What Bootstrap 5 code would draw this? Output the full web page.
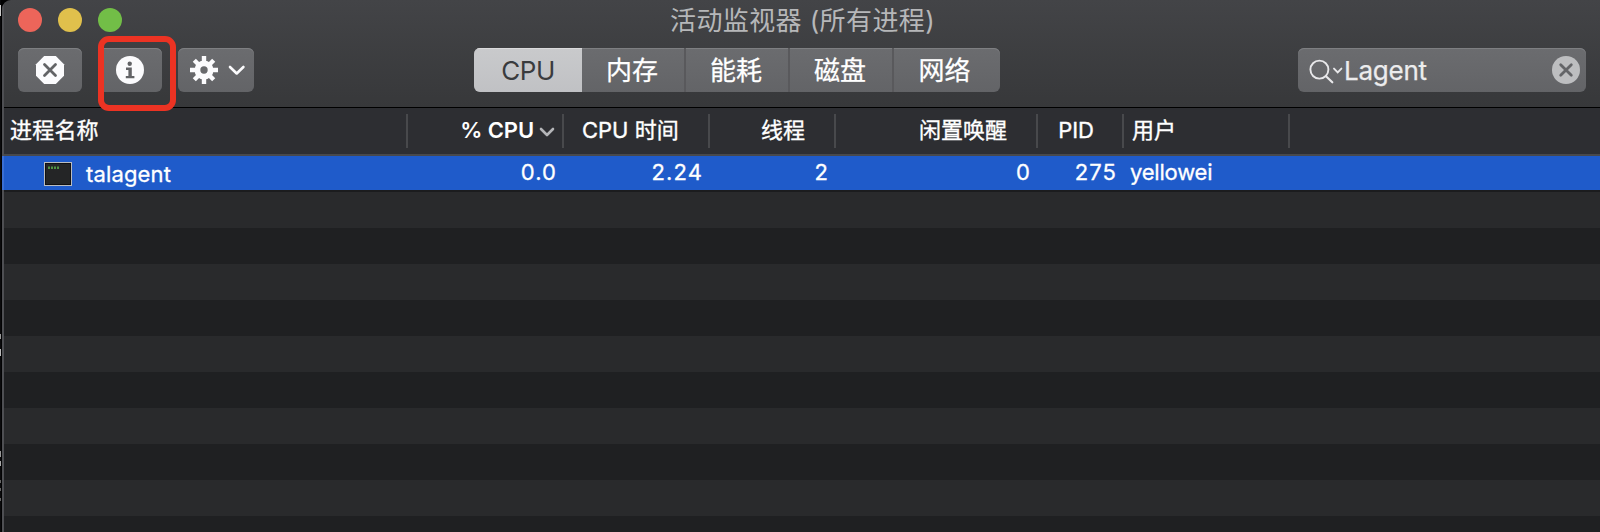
<!DOCTYPE html>
<html lang="zh-CN">
<head>
<meta charset="utf-8">
<title>活动监视器 (所有进程)</title>
<link href="https://cdn.jsdelivr.net/npm/bootstrap@5.3.0/dist/css/bootstrap.min.css" rel="stylesheet">
<script src="https://cdn.jsdelivr.net/npm/bootstrap@5.3.0/dist/js/bootstrap.bundle.min.js"></script>
<style>
  body { background:#020203; color:#fff; font-family:Inter,"Noto Sans CJK SC",sans-serif; font-size:22px; line-height:1; height:532px; }
  /* sliver of the desktop behind the window's left edge */
  .desk { width:1px; height:532px; background:linear-gradient(#0a0a0c 5px,#ccc 5px 16px,#0a0a0c 16px 334px,#999 334px 339px,#0a0a0c 339px 349px,#bbb 349px 356px,#0a0a0c 356px 451px,#999 451px 457px,#0a0a0c 457px 461px,#aaa 461px 466px,#0a0a0c 466px 480px,#666 480px 483px,#0a0a0c 483px 488px,#666 488px 491px,#0a0a0c 491px 498px,#666 498px 501px,#0a0a0c 501px); }
  .app-window { margin-left:1px; height:532px; border-top-left-radius:9px; background:#1f2022; padding-left:2px; }
  .app-window::before { content:""; position:absolute; inset:0 auto 0 0; width:2px; background:linear-gradient(#4e4f53 156px,#3a6fd4 156px 190px,#4e4f53 190px); }
  .titlebar { height:108px; background:linear-gradient(#434447,#37383a); border-bottom:1px solid #000; }
  .title-row { height:48px; padding-left:14px; }
  .lights { gap:16px; padding-top:8px; width:300px; }
  .light { width:24px; height:24px; }
  .window-title { font-size:26px; letter-spacing:.4px; color:#b6b7b9; line-height:40px; left:668px; top:1px; }
  .tool-row { height:44px; padding:0 14px; }
  .tool, .search-box, .segments { height:44px; background:linear-gradient(#6b6c6f,#636467); border-radius:6px; box-shadow:inset 0 1px #7e7f82; }
  .tool { width:64px; border:0; padding:0; }
  .tool.wide { width:76px; }
  .segments { margin-left:220px; width:526px; font-size:26px; overflow:hidden; }
  .seg { border:0; border-right:2px solid #59595c; background:none; color:#fff; padding:2px 2px 0 0; line-height:42px; width:104px; -webkit-text-stroke:.25px #fff; }
  .seg.on { width:108px; background:linear-gradient(#c9cacc,#c0c1c4); border:0; color:#3a3b3d; -webkit-text-stroke:0; box-shadow:inset 0 1px #dadadc; letter-spacing:-.4px; padding-right:0; }
  .seg:last-child { width:106px; border:0; padding-right:5px; }
  .search-box { width:288px; font-size:26px; color:#ececed; line-height:45px; }
  .query { letter-spacing:-.25px; -webkit-text-stroke:.25px #ececed; }
  .ring { left:98px; top:36px; width:78px; height:75px; border:6px solid #ec3323; border-radius:11px; z-index:3; }
  .head-row { height:48px; background:#2d2e32; border-bottom:2px solid #48494c; padding-top:6px; }
  .cell { position:relative; flex:none; height:34px; line-height:32px; white-space:nowrap; }
  .head-row .cell { border-right:2px solid #48494c; line-height:33px; -webkit-text-stroke:.35px #fff; }
  .head-row b { font-weight:600; -webkit-text-stroke:0; letter-spacing:-.1px; }
  .c1{width:404px} .c2{width:156px} .c3{width:146px} .c4{width:126px} .c5{width:202px} .c6{width:86px} .c7{width:166px}
  .sel-row { height:34px; background:#1f5bca; -webkit-text-stroke:.3px #fff; }
  .digits { letter-spacing:1.1px; padding-right:7px; }
  .stripes { height:342px; border-top:2px solid #1b1c1e; background:repeating-linear-gradient(#292a2c 0 36px,#1f2022 36px 72px); }
</style>
</head>
<body class="overflow-hidden d-flex">
<div class="desk flex-shrink-0"></div>
<main class="app-window position-relative overflow-hidden flex-grow-1">
  <header class="titlebar">
    <div class="title-row">
      <div class="lights d-flex">
        <span class="light rounded-circle" style="background:#ed655a"></span>
        <span class="light rounded-circle" style="background:#e0c04c"></span>
        <span class="light rounded-circle" style="background:#72be47"></span>
      </div>
      <div class="window-title position-absolute text-nowrap">活动监视器 (所有进程)</div>
    </div>
    <div class="tool-row d-flex">
      <div class="d-flex gap-3">
        <button class="tool" aria-label="stop"><svg class="d-block" width="64" height="44"><path d="M26.2 8h11.6L46 16.2v11.6L37.8 36H26.2L18 27.8V16.2z" fill="#fbfbfd"/><path d="M26.5 16.5l11 11m0-11l-11 11" stroke="#626366" stroke-width="2.8" stroke-linecap="round"/></svg></button>
        <button class="tool" aria-label="info"><svg class="d-block" width="64" height="44"><circle cx="32" cy="22" r="14" fill="#fbfbfd"/><circle cx="31.7" cy="15.8" r="2.2" fill="#626366"/><path d="M28 19.6h5.8v8.4h2.6v2.3H27.8V28h2.6v-6.1H28z" fill="#626366"/></svg></button>
        <button class="tool wide" aria-label="actions"><svg class="d-block" width="76" height="44"><g transform="translate(26 22)"><g stroke="#fbfbfd" stroke-width="4.4"><path d="M0-14V14M-14 0H14M-9.7-9.7L9.7 9.7M-9.7 9.7L9.7-9.7"/></g><circle r="9.5" fill="#fbfbfd"/><circle r="3.7" fill="#68696c"/></g><path d="M52 19l6.7 6.5 6.7-6.5" fill="none" stroke="#fbfbfd" stroke-width="2.6" stroke-linecap="round" stroke-linejoin="round"/></svg></button>
      </div>
      <div class="segments d-flex">
        <button class="seg on">CPU</button><button class="seg">内存</button><button class="seg">能耗</button><button class="seg">磁盘</button><button class="seg">网络</button>
      </div>
      <div class="search-box d-flex ms-auto">
        <svg width="46" height="44" fill="none" stroke="#e8e8ea" stroke-linecap="round"><circle cx="21.4" cy="21.6" r="9" stroke-width="1.9"/><path d="M28 28.3l6.3 6" stroke-width="2.2"/><path d="M36 20.6l3.7 3.7 3.7-3.7" stroke-width="1.9"/></svg>
        <span class="query">Lagent</span>
        <svg class="ms-auto" width="36" height="44"><circle cx="16" cy="22" r="14" fill="#bdbec0"/><path d="M10.7 16.7l10.6 10.6m0-10.6L10.7 27.3" stroke="#646568" stroke-width="2.8" stroke-linecap="round"/></svg>
      </div>
    </div>
  </header>
  <section>
    <div class="head-row d-flex">
      <div class="cell c1" style="padding-left:6px;letter-spacing:.2px">进程名称</div>
      <div class="cell c2 text-end" style="padding-right:6px"><b>% CPU</b><svg width="22" height="16" fill="none" stroke="#b4b5b8" stroke-width="2.6" stroke-linecap="round" stroke-linejoin="round"><path d="M7 5l6 6 6-6"/></svg></div>
      <div class="cell c3" style="padding-left:18px">CPU 时间</div>
      <div class="cell c4 text-end" style="padding-right:29px">线程</div>
      <div class="cell c5 text-end" style="padding-right:29px">闲置唤醒</div>
      <div class="cell c6 text-end" style="padding-right:28px">PID</div>
      <div class="cell c7" style="padding-left:8px">用户</div>
    </div>
    <div class="sel-row d-flex">
      <div class="cell c1 d-flex" style="padding-left:40px;line-height:36px"><svg width="28" height="34"><rect x=".5" y="6.5" width="27" height="23" fill="#242526" stroke="#b9bcc0"/><rect x="1.5" y="7.5" width="25" height="21" fill="none" stroke="#111"/><path d="M4 11.7h11" stroke="#4f9245" stroke-width="2.4" stroke-dasharray="2 1"/></svg><span style="padding-left:14px;letter-spacing:.15px">talagent</span></div>
      <div class="cell c2 text-end digits">0.0</div>
      <div class="cell c3 text-end digits">2.24</div>
      <div class="cell c4 text-end digits">2</div>
      <div class="cell c5 text-end digits">0</div>
      <div class="cell c6 text-end digits">275</div>
      <div class="cell c7" style="padding-left:6px;letter-spacing:-.2px">yellowei</div>
    </div>
    <div class="stripes"></div>
  </section>
</main>
<div class="ring position-absolute"></div>
</body>
</html>
